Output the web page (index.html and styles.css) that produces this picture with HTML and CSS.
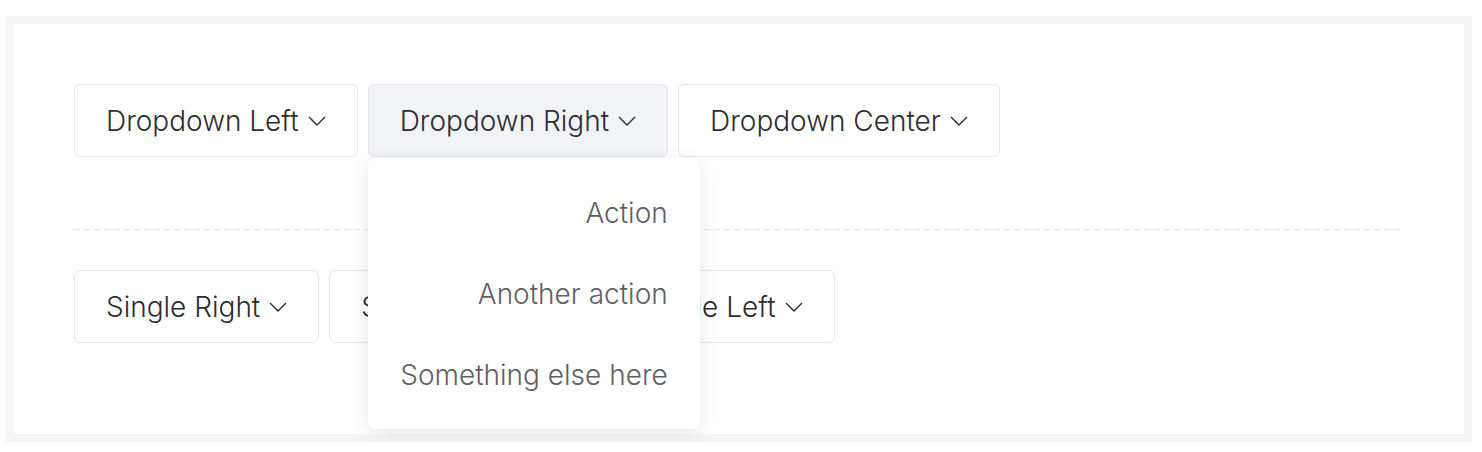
FILE: index.html
```html
<!DOCTYPE html>
<html>
<head>
<meta charset="utf-8">
<link rel="stylesheet" href="styles.css">
</head>
<body>
<div class="card">
  <div class="row">
    <button class="btn">Dropdown Left<svg class="chev" viewBox="0 0 18 10"><path d="M1 1 L9 9 L17 1"/></svg></button>
    <div class="dd">
      <button class="btn active">Dropdown Right<svg class="chev" viewBox="0 0 18 10"><path d="M1 1 L9 9 L17 1"/></svg></button>
      <ul class="menu">
        <li>Action</li>
        <li>Another action</li>
        <li>Something else here</li>
      </ul>
    </div>
    <button class="btn">Dropdown Center<svg class="chev" viewBox="0 0 18 10"><path d="M1 1 L9 9 L17 1"/></svg></button>
  </div>
  <div class="divider"></div>
  <div class="row">
    <button class="btn">Single Right<svg class="chev" viewBox="0 0 18 10"><path d="M1 1 L9 9 L17 1"/></svg></button>
    <button class="btn">Single Center<svg class="chev" viewBox="0 0 18 10"><path d="M1 1 L9 9 L17 1"/></svg></button>
    <button class="btn">Single Left<svg class="chev" viewBox="0 0 18 10"><path d="M1 1 L9 9 L17 1"/></svg></button>
  </div>
</div>
</body>
</html>
```
FILE: styles.css
```css
* { box-sizing: border-box; }
body {
  margin: 0;
  padding: 16px 10px 0 6px;
  background: #ffffff;
  font-family: Inter, "Liberation Sans", Arial, sans-serif;
}
.card {
  width: 1466px;
  height: 426px;
  border: 8px solid #f5f5f7;
  background: #ffffff;
  padding: 60px;
}
.row {
  display: flex;
  gap: 10px;
}
.dd {
  position: relative;
}
.btn {
  display: inline-flex;
  align-items: center;
  height: 73px;
  padding: 0 31px 0 31px;
  border: 1px solid #e6e6eb;
  border-radius: 6px;
  background: #ffffff;
  color: #2c2d30;
  font-family: inherit;
  font-size: 28px;
  font-weight: 350;
  white-space: nowrap;
}
.btn.active {
  background: #f2f3f7;
}
.chev {
  width: 18px;
  height: 10px;
  margin-left: 9px;
  fill: none;
  stroke: #2c2d30;
  stroke-width: 1.4;
}
.menu {
  position: absolute;
  top: 74px;
  left: 0;
  width: 332px;
  margin: 0;
  padding: 14px 0;
  list-style: none;
  background: #ffffff;
  border-radius: 8px;
  box-shadow: 0 4px 18px rgba(0, 0, 0, 0.1);
  z-index: 2;
}
.menu li {
  height: 81px;
  display: flex;
  align-items: center;
  justify-content: flex-end;
  padding-right: 32px;
  font-size: 28px;
  font-weight: 350;
  color: #5f6166;
}
.divider {
  height: 1px;
  margin: 72px 0 40px;
  background-image: linear-gradient(to right, #e2e2e6 60%, transparent 60%);
  background-size: 10px 1px;
}
```
